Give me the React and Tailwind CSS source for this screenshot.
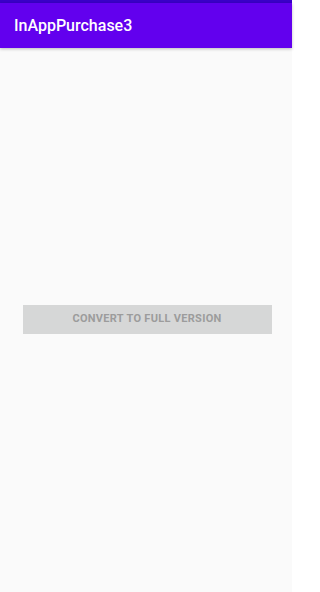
export default function App() {
  return (
    <div className="flex h-[592px] w-[292px] flex-col bg-[#fafafa] font-['Roboto',sans-serif]">
      <div className="h-[3px] bg-[#3a00c8]" />
      <div className="flex h-[45px] items-center bg-[#6200ee] px-[14px] shadow-[0_1px_3px_rgba(0,0,0,0.25)]">
        <span className="text-[16px] font-medium text-white">InAppPurchase3</span>
      </div>
      <div className="flex flex-1 items-center justify-center pb-[2px] pl-[2px]">
        <button className="flex h-[29px] w-[249px] items-center justify-center bg-[#d6d7d7] text-[11px] font-bold tracking-[0.3px] text-[#9c9c9c]">
          CONVERT TO FULL VERSION
        </button>
      </div>
    </div>
  );
}
